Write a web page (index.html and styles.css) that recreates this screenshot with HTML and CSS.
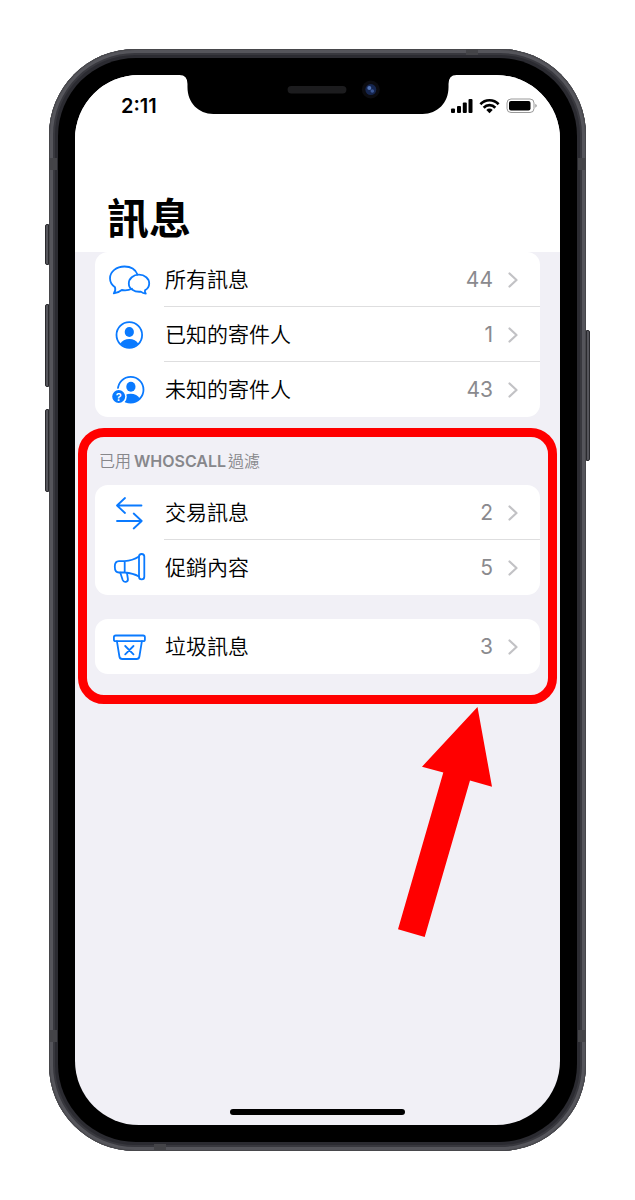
FILE: index.html
```html
<!DOCTYPE html>
<html lang="zh-Hant">
<head>
<meta charset="utf-8">
<meta name="viewport" content="width=device-width, initial-scale=1">
<title>訊息</title>
<link rel="stylesheet" href="styles.css">
</head>
<body>
<svg class="defs" width="0" height="0" aria-hidden="true">
  <symbol id="chevron" viewBox="0 0 10 16"><path d="M1.500 1.500 8.500 8l-7 6.500" fill="none" stroke="#c2c2c5" stroke-width="2.200" stroke-linecap="round" stroke-linejoin="round"/></symbol>
</svg>
<div class="phone">
  <span class="key key-mute"></span>
  <span class="key key-up"></span>
  <span class="key key-down"></span>
  <span class="key key-power"></span>
  <span class="band band-tl"></span>
  <span class="band band-tr"></span>
  <span class="band band-bl"></span>
  <span class="band band-br"></span>
  <span class="band band-top"></span>
  <span class="band band-bottom"></span>
  <div class="bezel">
    <div class="screen">
      <svg class="notch" width="277" height="40" viewBox="0 -1 278 40" aria-hidden="true">
        <path d="M0-1V0Q8 0 8 9V12C8 28 19 39 34 39H244C259 39 270 28 270 12V9Q270 0 278 0V-1Z" fill="#000"/>
        <rect x="108.500" y="11" width="59" height="7.500" rx="3.700" fill="#1c1c1e"/>
        <circle cx="192" cy="14.500" r="9" fill="#0c0c10"/>
        <circle cx="192" cy="14.500" r="5.500" fill="#16264f"/>
        <circle cx="190.500" cy="13" r="2" fill="#5375b8"/>
        <circle cx="193.500" cy="16" r="1.800" fill="#3a5796"/>
      </svg>
      <header class="top">
        <div class="status">
          <time class="clock">2:11</time>
          <svg width="87" height="18" viewBox="0 0 87 18" role="img" aria-label="訊號、Wi-Fi、電池">
            <rect x="1" y="11.500" width="4" height="4.500" rx="1"/>
            <rect x="7" y="9" width="4" height="7" rx="1"/>
            <rect x="12.800" y="5.500" width="4" height="10.500" rx="1"/>
            <rect x="18.500" y="2" width="4" height="14" rx="1"/>
            <g fill="none" stroke="#000" stroke-width="2.700">
              <path d="M30.400 7.200A12.500 12.500 0 0 1 48.600 7.200"/>
              <path d="M33.700 10.700A8 8 0 0 1 45.300 10.700"/>
            </g>
            <path d="M36.300 12.900A4.600 4.600 0 0 1 42.700 12.900L39.500 16.200Z"/>
            <rect x="57" y="2" width="27" height="13.500" rx="4" fill="none" stroke="#999"/>
            <rect x="59" y="4" width="21.500" height="9.500" rx="2"/>
            <path d="M85.300 6.700q1.500 .8 1.500 2t-1.500 2z" fill="#999"/>
          </svg>
        </div>
        <h1 class="title">訊息</h1>
      </header>
      <main class="content">
        <ul class="card card-first">
          <li><a class="row" href="#all">
            <svg class="icon" viewBox="0 0 44 36" aria-hidden="true">
              <path d="M30.500 12.500C28.500 7.500 23.500 4.500 17.500 4.500C9.500 4.500 3 9.600 3 16.300C3 20 5 23.200 8 25.300C8.600 27.500 8 30 6.800 31.300C10 31 13 29.500 14.800 28C18.500 28.600 22 28.200 25 26.800"/>
              <path d="M32 12.700c5.700 0 10.200 3.800 10.200 8.700c0 3-1.600 5.300-4.200 6.900c-.3 1.200 0 2.400 .8 3.300c-2 0-3.800-.8-5-1.900c-6.500 .6-12-3-12-8.300c0-4.900 4.500-8.700 10.200-8.700z"/>
            </svg>
            <span class="body"><span class="label">所有訊息</span><span class="count">44</span><svg class="chevron" aria-hidden="true"><use href="#chevron"/></svg></span>
          </a></li>
          <li><a class="row" href="#known">
            <svg class="icon" viewBox="0 0 44 36" aria-hidden="true">
              <circle cx="22.300" cy="18" r="12.800"/>
              <ellipse class="solid" cx="22.300" cy="15" rx="4.600" ry="5"/>
              <path class="solid" d="M13.300 26.800C14.800 23.700 18.300 22 22.300 22S29.800 23.700 31.300 26.800A12.800 12.800 0 0 1 13.300 26.800Z"/>
            </svg>
            <span class="body"><span class="label">已知的寄件人</span><span class="count">1</span><svg class="chevron" aria-hidden="true"><use href="#chevron"/></svg></span>
          </a></li>
          <li><a class="row" href="#unknown">
            <svg class="icon" viewBox="0 0 44 36" aria-hidden="true">
              <circle cx="23.700" cy="17.700" r="12.800"/>
              <ellipse class="solid" cx="23.900" cy="14.700" rx="4.600" ry="5"/>
              <path class="solid" d="M14.700 26.500C16.200 23.400 19.700 21.700 23.700 21.700S31.200 23.400 32.700 26.500A12.800 12.800 0 0 1 14.700 26.500Z"/>
              <circle class="badge" cx="11.700" cy="24.500" r="7.300"/>
              <text class="mark" x="11.700" y="28.500">?</text>
            </svg>
            <span class="body"><span class="label">未知的寄件人</span><span class="count">43</span><svg class="chevron" aria-hidden="true"><use href="#chevron"/></svg></span>
          </a></li>
        </ul>
        <section class="highlight">
          <h2 class="caption">已用<b class="brand">WHOSCALL</b>過濾</h2>
          <ul class="card">
            <li><a class="row" href="#transactions">
              <svg class="icon" viewBox="0 0 44 36" aria-hidden="true">
                <path d="M34.500 10.500H10M18 3 10 10.500 18 18M10 26H34.500M26.700 18.500 34.700 26 26.700 33.500"/>
              </svg>
              <span class="body"><span class="label">交易訊息</span><span class="count">2</span><svg class="chevron" aria-hidden="true"><use href="#chevron"/></svg></span>
            </a></li>
            <li><a class="row" href="#promotions">
              <svg class="icon" viewBox="0 0 44 36" aria-hidden="true">
                <path d="M32 6.500C28 9 23 10.800 17.700 11.200H12C9 11.200 7.800 13.500 7.800 16.700S9 22.500 12 22.500H17.700C23 23 28 24.300 32 26.500M17.700 11.200V22.500"/>
                <rect x="32" y="4" width="5.300" height="25.300" rx="2.600"/>
                <path d="M13.300 22.700 15.700 30C16.800 33 21.300 32.200 20.900 29L20 23"/>
              </svg>
              <span class="body"><span class="label">促銷內容</span><span class="count">5</span><svg class="chevron" aria-hidden="true"><use href="#chevron"/></svg></span>
            </a></li>
          </ul>
          <ul class="card">
            <li><a class="row" href="#junk">
              <svg class="icon" viewBox="0 0 44 36" aria-hidden="true">
                <rect x="6.900" y="6.500" width="31" height="5.700" rx="1.800"/>
                <path d="M9.900 12.200 12.400 27.500Q12.800 30 15.200 30H29.600Q32 30 32.400 27.500L34.900 12.200M18.200 17 26.500 25.300M26.500 17 18.200 25.300"/>
              </svg>
              <span class="body"><span class="label">垃圾訊息</span><span class="count">3</span><svg class="chevron" aria-hidden="true"><use href="#chevron"/></svg></span>
            </a></li>
          </ul>
          <svg class="pointer" width="94" height="230" viewBox="0 0 94 230" aria-hidden="true"><path d="M79.500 0 94 79.800 72 73.500 26.700 230 0 222.300 45.300 65.500 24 59.700Z" fill="#f00"/></svg>
        </section>
      </main>
      <div class="home"></div>
    </div>
  </div>
</div>
</body>
</html>
```
FILE: styles.css
```css
* {
  box-sizing: border-box;
}

body {
  margin: 0;
  min-height: 100vh;
  padding: 49px;
  display: flex;
  background: #fff;
  color: #000;
  font-family: Inter, "Noto Sans CJK TC", sans-serif;
}

.defs {
  position: absolute;
}

.phone {
  position: relative;
  flex: 1;
  display: flex;
  padding: 9px;
  border-radius: 86px;
  background: #2b2b31;
  box-shadow: inset 0 0 0 1px #47474b, inset 0 0 0 4px #55555b, inset 0 0 0 6px #38383e;
}

.bezel {
  flex: 1;
  display: flex;
  padding: 17px;
  border-radius: 78px;
  background: #000;
}

.screen {
  position: relative;
  flex: 1;
  display: flex;
  flex-direction: column;
  overflow: hidden;
  border-radius: 64px;
  background: #f1f0f6;
}

.key {
  position: absolute;
  left: -4px;
  width: 4px;
  border: 1px solid #2a2a2e;
  border-radius: 2px 0 0 2px;
  background: #55555b;
}

.key-mute {
  top: 175px;
  height: 41px;
}

.key-up {
  top: 255px;
  height: 83px;
}

.key-down {
  top: 360px;
  height: 83px;
}

.key-power {
  top: 281px;
  right: -4px;
  left: auto;
  height: 131px;
  border-radius: 0 2px 2px 0;
}

.band {
  position: absolute;
  width: 8px;
  height: 12px;
  background: #444448;
}

.band-tl {
  top: 109px;
  left: 0;
}

.band-tr {
  top: 109px;
  right: 0;
}

.band-bl {
  bottom: 109px;
  left: 0;
}

.band-br {
  bottom: 109px;
  right: 0;
}

.band-top {
  top: 0;
  right: 108px;
  width: 12px;
  height: 6px;
}

.band-bottom {
  bottom: 1px;
  left: 105px;
  width: 12px;
  height: 6px;
}

.notch {
  position: absolute;
  top: -1px;
  left: 50%;
  transform: translateX(-50%);
}

.top {
  background: #fff;
  padding-bottom: 7px;
}

.status {
  display: flex;
  align-items: center;
  justify-content: space-between;
  height: 62px;
  padding: 0 23px 0 46px;
}

.clock {
  font-size: 20px;
  font-weight: 600;
  line-height: 24px;
}

.title {
  margin: 56px 0 0;
  padding-left: 32px;
  font-size: 42px;
  font-weight: 700;
  line-height: 52px;
}

.content {
  flex: 1;
}

.card {
  margin: 0;
  padding: 0;
  list-style: none;
  overflow: hidden;
  border-radius: 13px;
  background: #fff;
}

.card-first {
  margin: 0 20px 11px;
}

.row {
  display: flex;
  align-items: center;
  gap: 13px;
  padding-left: 12px;
  color: inherit;
  text-decoration: none;
}

.icon {
  flex: none;
  width: 44px;
  height: 36px;
  fill: none;
  stroke: #0a7aff;
  stroke-width: 1.8;
  stroke-linecap: round;
  stroke-linejoin: round;
}

.icon .solid {
  fill: #0a7aff;
  stroke: none;
}

.icon .badge {
  fill: #0a7aff;
  stroke: #fff;
  stroke-width: 1.6;
}

.icon .mark {
  fill: #fff;
  stroke: none;
  font-size: 11px;
  font-weight: 600;
  text-anchor: middle;
}

.body {
  flex: 1;
  display: flex;
  align-items: center;
  height: 55px;
  padding: 2px 22px 0 1px;
  border-bottom: 1px solid #dededf;
  font-size: 21px;
  line-height: 28px;
}

.card li:last-child .body {
  border-bottom-color: transparent;
}

.label {
  flex: 1;
  font-weight: 350;
}

.count {
  color: #8a8a8e;
}

.chevron {
  width: 10px;
  height: 16px;
  margin-left: 15px;
}

.highlight {
  position: relative;
  display: grid;
  margin: 0 3px;
  padding: 12px 8px 21px;
  border: 9px solid #f00;
  border-radius: 26px;
}

.highlight .card + .card {
  margin-top: 24px;
}

.caption {
  margin: 0 0 12px;
  padding-left: 4px;
  color: #87878b;
  font-size: 16px;
  font-weight: 350;
  line-height: 24px;
}

.brand {
  margin: 0 2px 0 3px;
  font-weight: 600;
}

.pointer {
  position: absolute;
  top: calc(100% + 12px);
  right: 56px;
}

.home {
  align-self: center;
  width: 36%;
  height: 6px;
  margin-bottom: 10px;
  border-radius: 3px;
  background: #000;
}
```
